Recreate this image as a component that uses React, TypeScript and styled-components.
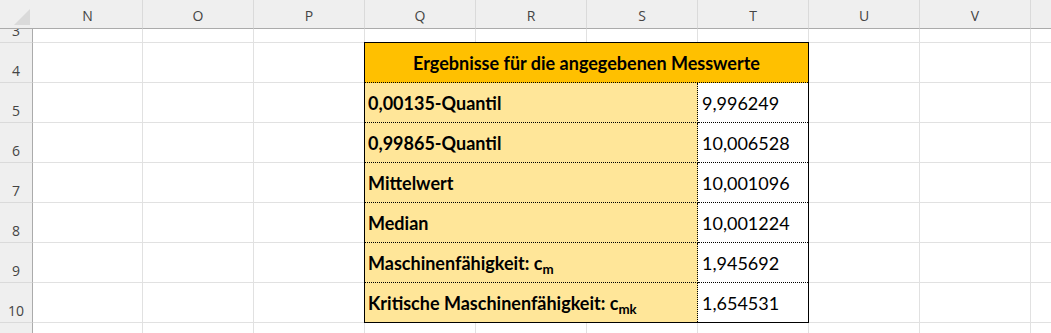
import { ReactElement, Fragment } from 'react'
import styled, { createGlobalStyle } from 'styled-components'

const GlobalStyle = createGlobalStyle`
  *, *::before, *::after { box-sizing: border-box; }
  html, body {
    margin: 0;
    padding: 0;
    background: #fff;
    overflow: hidden;
  }
`

const Sheet = styled.div`
  display: grid;
  grid-template-columns: 33px 110px repeat(9, 111px);
  grid-template-rows: 29px 14px repeat(8, 40px);
  width: 1051px;
  height: 333px;
  overflow: hidden;
  font-family: "Open Sans", "Noto Sans", sans-serif;
`

const Corner = styled.div`
  background: #efefef;
  border-bottom: 1px solid #ababab;
  display: flex;
  align-items: flex-end;
  justify-content: flex-end;
  padding: 0 3px 3px 0;
`

const ColHead = styled.div`
  background: #efefef;
  border-right: 1px solid #dadada;
  border-bottom: 1px solid #ababab;
  display: flex;
  align-items: center;
  justify-content: center;
  padding-top: 3px;
  font-size: 14px;
  color: #444;
`

const RowHead = styled.div`
  background: #efefef;
  border-right: 1px solid #ababab;
  border-bottom: 1px solid #dadada;
  display: flex;
  align-items: flex-end;
  justify-content: center;
  overflow: hidden;
  font-size: 14px;
  line-height: 20px;
  padding-bottom: 1px;
  color: #444;
`

const Cell = styled.div`
  border-right: 1px solid #e1e1e1;
  border-bottom: 1px solid #e1e1e1;
`

const Table = styled.div`
  grid-column: 5 / span 4;
  grid-row: 3 / span 7;
  margin: -1px 0 0 -1px;
  z-index: 1;
  border: 1px solid #000;
  display: grid;
  grid-template-columns: 333px 1fr;
  grid-template-rows: repeat(6, 40px) 1fr;
  font-family: Lato, "Liberation Sans", sans-serif;
  font-size: 18px;
  color: #000;
`

const Title = styled.div`
  grid-column: 1 / span 2;
  background: #ffc000;
  border-bottom: 1px dotted #000;
  display: flex;
  align-items: center;
  justify-content: center;
  font-weight: 700;
`

const Label = styled.div<{ $last?: boolean }>`
  background: #ffe699;
  border-right: 1px dotted #000;
  border-bottom: ${({ $last }) => ($last ? 'none' : '1px dotted #000')};
  display: flex;
  align-items: center;
  padding-left: 3px;
  font-weight: 700;
  white-space: nowrap;
`

const Value = styled.div<{ $last?: boolean }>`
  background: #fff;
  border-bottom: ${({ $last }) => ($last ? 'none' : '1px dotted #000')};
  display: flex;
  align-items: center;
  padding-left: 4px;
`

const Sub = styled.sub`
  font-size: 0.74em;
  vertical-align: -0.28em;
  line-height: 0;
`

// the last column (W) and last row (11) run past the window edge, their labels are not visible
const COLS = ['N', 'O', 'P', 'Q', 'R', 'S', 'T', 'U', 'V', '']
const ROWS = [3, 4, 5, 6, 7, 8, 9, 10, 11]

// table occupies Q..T (index 3..6) for rows 4..10
const inTable = (row: number, col: number): boolean =>
  row >= 4 && row <= 10 && col >= 3 && col <= 6

const results: Array<{ label: ReactElement | string, value: string }> = [
  { label: '0,00135-Quantil', value: '9,996249' },
  { label: '0,99865-Quantil', value: '10,006528' },
  { label: 'Mittelwert', value: '10,001096' },
  { label: 'Median', value: '10,001224' },
  { label: <>Maschinenfähigkeit: c<Sub>m</Sub></>, value: '1,945692' },
  { label: <>Kritische Maschinenfähigkeit: c<Sub>mk</Sub></>, value: '1,654531' }
]

function CornerMark (): ReactElement {
  return (
    <svg width="16" height="16" viewBox="0 0 16 16">
      <polygon points="0,16 16,16 16,0" fill="#dadada" />
    </svg>
  )
}

export default function App (): ReactElement {
  return (
    <>
      <GlobalStyle />
      <Sheet>
        <Corner><CornerMark /></Corner>
        {COLS.map((c, i) => <ColHead key={i}>{c}</ColHead>)}
        {ROWS.map(r => (
          <Fragment key={r}>
            <RowHead>{r < 11 ? r : ''}</RowHead>
            {COLS.map((c, i) => inTable(r, i) ? null : <Cell key={`${i}-${r}`} />)}
          </Fragment>
        ))}
        <Table>
          <Title>Ergebnisse für die angegebenen Messwerte</Title>
          {results.map((item, i) => (
            <Fragment key={i}>
              <Label $last={i === results.length - 1}><span>{item.label}</span></Label>
              <Value $last={i === results.length - 1}>{item.value}</Value>
            </Fragment>
          ))}
        </Table>
      </Sheet>
    </>
  )
}
